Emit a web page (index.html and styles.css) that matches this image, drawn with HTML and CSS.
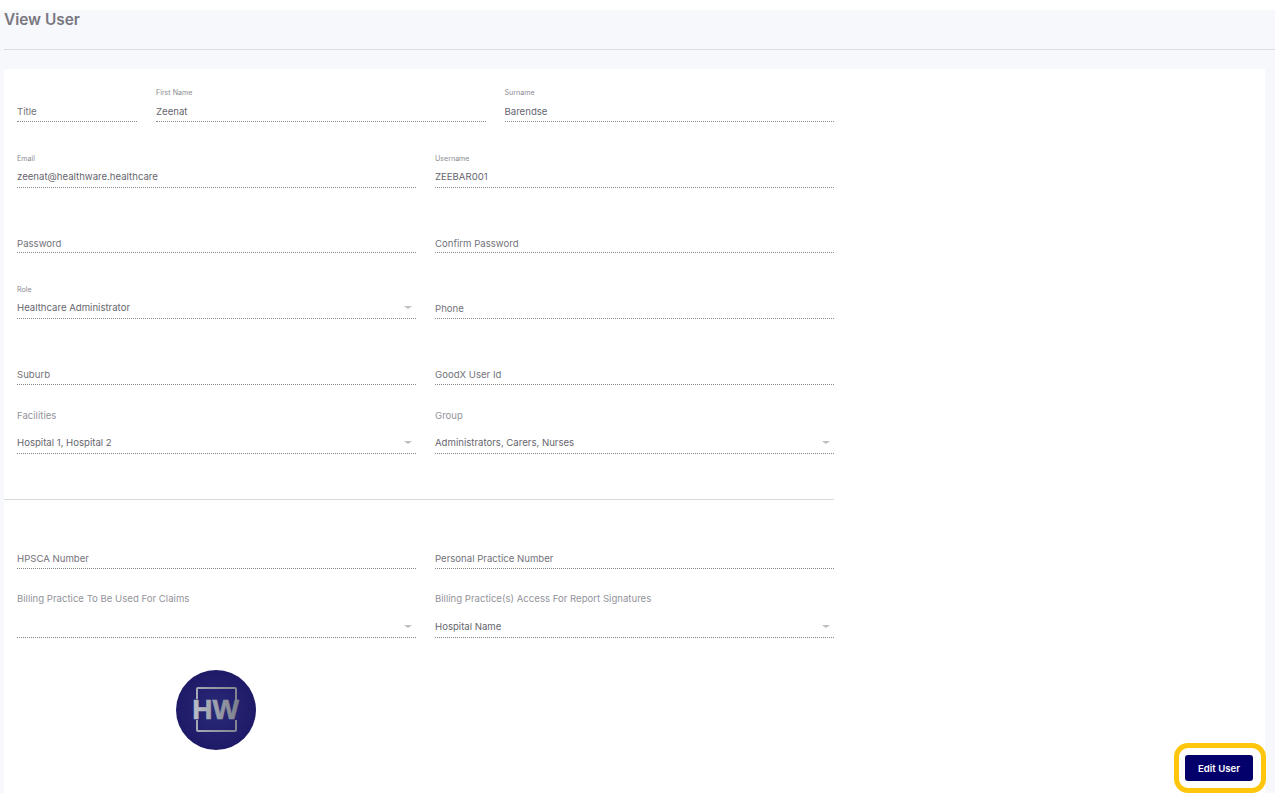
FILE: index.html
```html
<!DOCTYPE html>
<html lang="en">
<head>
<meta charset="utf-8">
<title>View User</title>
<link rel="stylesheet" href="styles.css">
</head>
<body>
<main class="page">
  <header class="head"><h1 class="title">View User</h1></header>
  <section class="card">
    <form class="form">
      <div class="row r1 thirds">
        <div class="field"><span class="value muted">Title</span></div>
        <div class="field"><label class="tiny">First Name</label><span class="value">Zeenat</span></div>
        <div class="field"><label class="tiny">Surname</label><span class="value">Barendse</span></div>
      </div>
      <div class="row r2">
        <div class="field"><label class="tiny">Email</label><span class="value">zeenat@healthware.healthcare</span></div>
        <div class="field"><label class="tiny">Username</label><span class="value">ZEEBAR001</span></div>
      </div>
      <div class="row r3">
        <div class="field"><span class="value muted">Password</span></div>
        <div class="field"><span class="value muted">Confirm Password</span></div>
      </div>
      <div class="row r4">
        <div class="field select"><label class="tiny">Role</label><span class="value">Healthcare Administrator</span><i class="caret"></i></div>
        <div class="field low"><span class="value muted">Phone</span></div>
      </div>
      <div class="row r4">
        <div class="field low"><span class="value muted">Suburb</span></div>
        <div class="field low"><span class="value muted">GoodX User Id</span></div>
      </div>
      <div class="row r5">
        <div class="field select"><label class="big">Facilities</label><span class="value">Hospital 1, Hospital 2</span><i class="caret"></i></div>
        <div class="field select"><label class="big">Group</label><span class="value">Administrators, Carers, Nurses</span><i class="caret"></i></div>
      </div>
      <hr class="divider">
      <div class="row r6">
        <div class="field low"><span class="value muted">HPSCA Number</span></div>
        <div class="field low"><span class="value muted">Personal Practice Number</span></div>
      </div>
      <div class="row r5 billing">
        <div class="field select"><label class="big">Billing Practice To Be Used For Claims</label><span class="value">&nbsp;</span><i class="caret"></i></div>
        <div class="field select"><label class="big">Billing Practice(s) Access For Report Signatures</label><span class="value">Hospital Name</span><i class="caret"></i></div>
      </div>
      <div class="logo-row">
        <svg class="logo" viewBox="0 0 80 80" width="80" height="80" role="img" aria-label="HW logo">
          <defs>
            <radialGradient id="disc" cx="50%" cy="50%" r="50%">
              <stop offset="0" stop-color="#2a2a78"/>
              <stop offset="1" stop-color="#1e1a68"/>
            </radialGradient>
            <linearGradient id="metal" gradientUnits="userSpaceOnUse" x1="16" y1="0" x2="63" y2="0">
              <stop offset="0" stop-color="#bcc0ca"/>
              <stop offset="1" stop-color="#7c7f8c"/>
            </linearGradient>
            <linearGradient id="frame" gradientUnits="userSpaceOnUse" x1="20" y1="0" x2="61" y2="0">
              <stop offset="0" stop-color="#a6a9b6"/>
              <stop offset="1" stop-color="#82858f"/>
            </linearGradient>
          </defs>
          <circle cx="40" cy="40" r="40" fill="url(#disc)"/>
          <path d="M21 29V19Q21 18 22 18H59Q60 18 60 19V30M60 50V60Q60 61 59 61H22Q21 61 21 60V50" fill="none" stroke="url(#frame)" stroke-width="2"/>
          <text class="logo-text" x="39.500" y="49" text-anchor="middle" fill="url(#metal)" stroke="url(#metal)" stroke-width="0.600">HW</text>
        </svg>
      </div>
    </form>
    <div class="actions">
      <button class="edit" type="button">Edit User</button>
    </div>
  </section>
</main>
</body>
</html>
```
FILE: styles.css
```css
* { box-sizing: border-box; }
html, body { margin: 0; height: 100%; background: #fff; }
body { padding-top: 10px; overflow: hidden; font-family: Inter, "Noto Sans", sans-serif; }
.page { height: 783px; background: #f7f8fc; padding-right: 10px; display: flex; flex-direction: column; }
.head { height: 40px; margin-left: 4px; margin-right: -10px; margin-bottom: 19px; border-bottom: 1px solid #dcdde3; }
.title { margin: 0; font-size: 15.400px; line-height: 20px; font-weight: 600; color: #77777e; }
.card { flex: 1; margin-left: 4px; background: #fff; border-radius: 4px 0 0 0; position: relative; }
.form { width: 830px; padding-left: 13px; }
.row { display: grid; grid-template-columns: 1fr 1fr; column-gap: 19px; align-items: end; }
.thirds { grid-template-columns: 120px 1fr 1fr; }
.r1 { height: 53px; }
.r2 { height: 66px; }
.r3 { height: 65px; }
.r4 { height: 66px; }
.r5 { height: 69px; }
.r6 { height: 69px; }
.field { position: relative; display: flex; flex-direction: column; border-bottom: 1px dotted #87878c; padding-bottom: 4px; }
.value { font-size: 9.600px; line-height: 13px; color: #66666e; }
.muted { color: #72727a; }
.tiny { font-size: 7.100px; line-height: 8px; color: #8b8b93; margin-bottom: 7px; }
.big { font-size: 9.600px; line-height: 13px; color: #93939b; margin-bottom: 14px; }
.r1 .field { padding-bottom: 3px; }
.r1 .tiny { margin-bottom: 8px; }
.r3 .field { padding-bottom: 2px; }
.field.low { padding-bottom: 3px; }
.billing .big { margin-bottom: 15px; }
.caret { position: absolute; right: 4px; bottom: 9px; width: 0; height: 0; border-left: 4px solid transparent; border-right: 4px solid transparent; border-top: 3px solid #bdbdc2; }
.divider { height: 1px; margin: 45px 0 0 -13px; border: 0; background: #d9dae0; }
.logo-row { padding: 32px 0 0 159px; }
.logo { display: block; }
.logo-text { font-family: "Liberation Sans", Arial, sans-serif; font-size: 28px; font-weight: 700; }
.actions { position: absolute; right: -1px; bottom: 0; padding: 7px 8px 7px 6px; border: 5px solid #ffc60b; border-radius: 14px; background: #fff; }
.edit { display: block; width: 68px; height: 26px; padding: 0; border: 0; border-radius: 3px; background: #03006b; color: #fff; font: 600 9.600px Inter, sans-serif; }
```
